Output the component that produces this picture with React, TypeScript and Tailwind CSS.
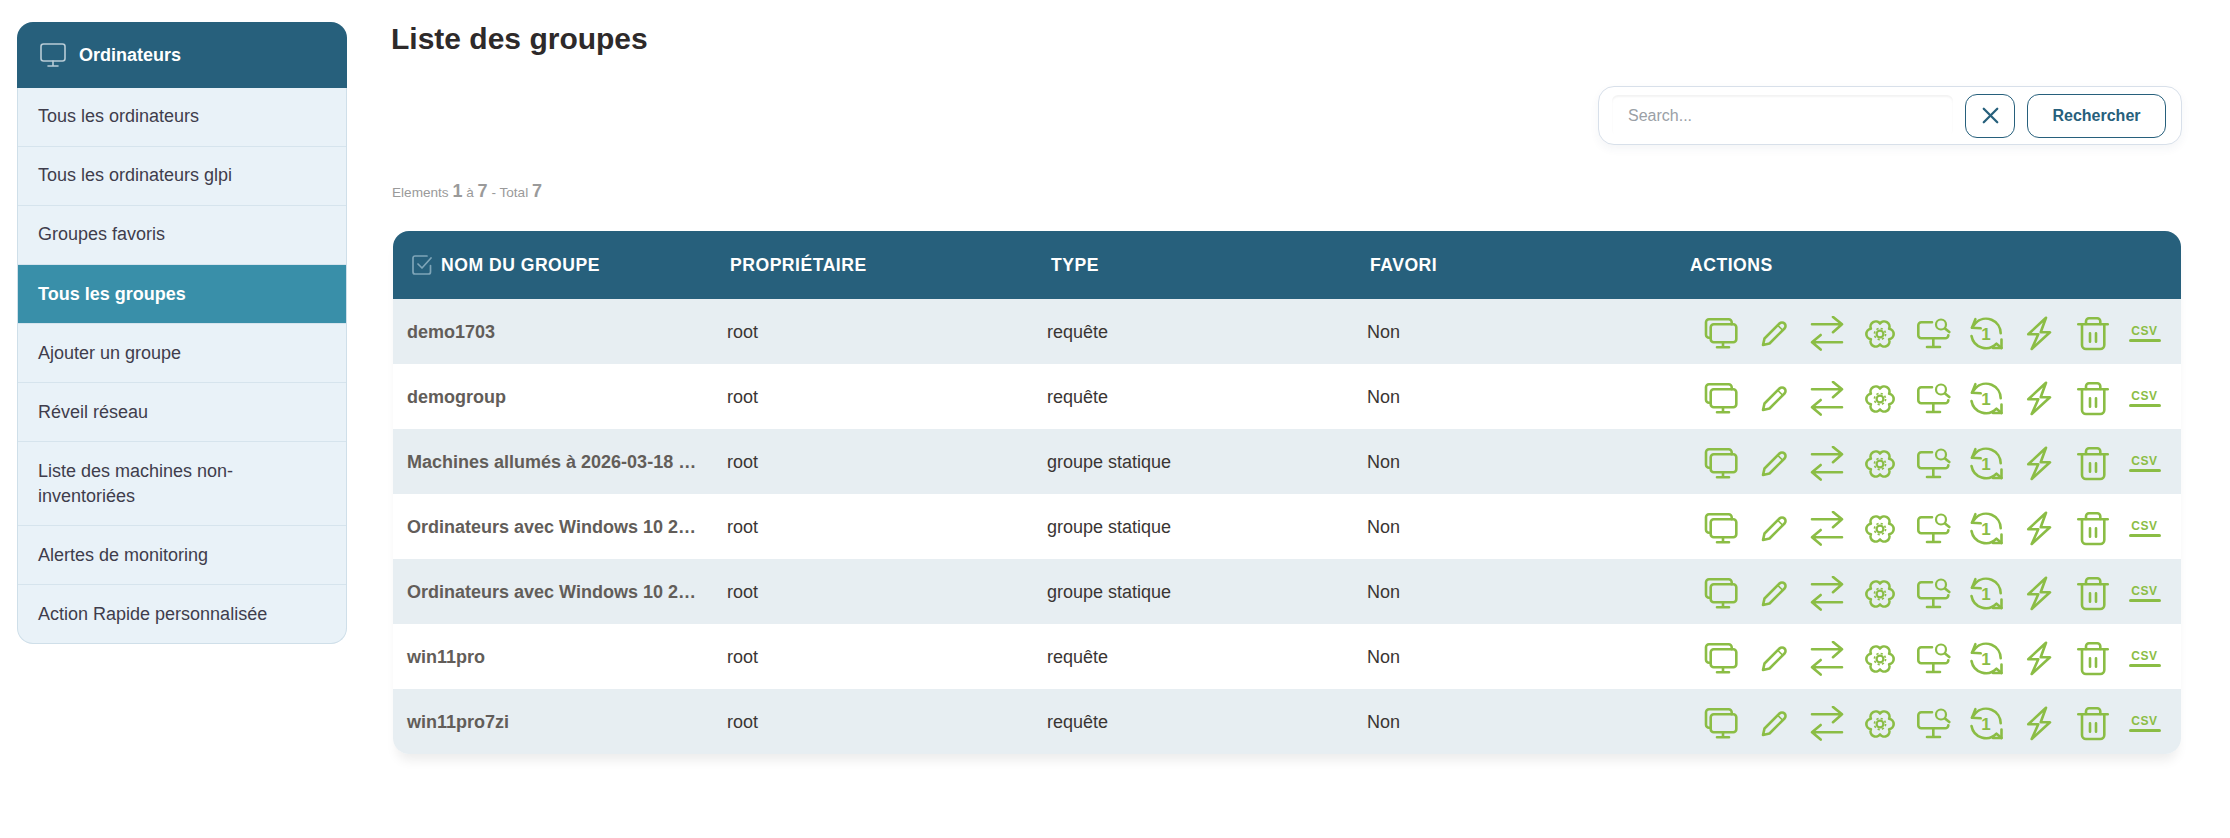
import { X } from 'lucide-react';
import type { ReactNode } from 'react';

const MENU = [
  'Tous les ordinateurs',
  'Tous les ordinateurs glpi',
  'Groupes favoris',
  'Tous les groupes',
  'Ajouter un groupe',
  'Réveil réseau',
  'Liste des machines non-inventoriées',
  'Alertes de monitoring',
  'Action Rapide personnalisée',
];

const GROUPS = [
  { name: 'demo1703', type: 'requête' },
  { name: 'demogroup', type: 'requête' },
  { name: 'Machines allumés à 2026-03-18 …', type: 'groupe statique' },
  { name: 'Ordinateurs avec Windows 10 2…', type: 'groupe statique' },
  { name: 'Ordinateurs avec Windows 10 2…', type: 'groupe statique' },
  { name: 'win11pro', type: 'requête' },
  { name: 'win11pro7zi', type: 'requête' },
];

const COLS = 'grid grid-cols-[320px_320px_320px_320px_1fr]';

const Icon = ({ children }: { children: ReactNode }) => (
  <svg
    viewBox="0 0 36 36"
    className="w-9 h-9 text-[#8bbd45]"
    fill="none"
    stroke="currentColor"
    strokeWidth="2.6"
    strokeLinecap="round"
    strokeLinejoin="round"
  >
    {children}
  </svg>
);

const RowActions = () => (
  <div className="flex items-center pl-[21px] pt-[3px]">
    <div className="w-[53px] flex justify-center">
      <Icon>
        <path d="M7.7 21.7H6a3 3 0 0 1-3-3V6.3a3 3 0 0 1 3-3h19.7a3 3 0 0 1 3 3v2" />
        <rect x="7.7" y="8.3" width="25.6" height="18" rx="3" />
        <path d="M20 26.3V31M14 31.2H26" />
      </Icon>
    </div>
    <div className="w-[53px] flex justify-center">
      <Icon>
        <path d="M7 29l1.5-6.5L23.5 7.5a3.2 3.2 0 0 1 5 5L13.5 27.5z" />
        <path d="M22 9.5l4.5 4.5" strokeWidth="1.6" />
      </Icon>
    </div>
    <div className="w-[53px] flex justify-center">
      <Icon>
        <path d="M3 8.3H33M24 .9L33 8.3L24 16.2" />
        <path d="M33 26.3H3M11.7 19L3 26.3L11.7 33.6" />
      </Icon>
    </div>
    <div className="w-[53px] flex justify-center">
      <Icon>
        <path d="M18 7.5A5.3 5.3 0 0 1 27.1 12.75A5.3 5.3 0 0 1 27.1 23.25A5.3 5.3 0 0 1 18 28.5A5.3 5.3 0 0 1 8.9 23.25A5.3 5.3 0 0 1 8.9 12.75A5.3 5.3 0 0 1 18 7.5Z" />
        <circle cx="18" cy="18" r="3.4" strokeWidth="2.2" />
        <circle cx="18" cy="18" r="5.6" strokeWidth="1.6" strokeDasharray="2.2 2.2" strokeLinecap="butt" />
      </Icon>
    </div>
    <div className="w-[53px] flex justify-center">
      <Icon>
        <path d="M17 6.3H6.3a3 3 0 0 0-3 3V19.3a3 3 0 0 0 3 3H30.3a3 3 0 0 0 3-3V19.5" />
        <path d="M18.3 22.3V30.5M12 31H25" />
        <circle cx="26" cy="8.5" r="5" strokeWidth="2.2" />
        <path d="M30 12.5L34.3 16" />
      </Icon>
    </div>
    <div className="w-[53px] flex justify-center">
      <Icon>
        <path d="M4 11.7L7.6 7A14.7 14.7 0 0 1 32.7 17.3" />
        <path d="M7.4 3.2L4 11.7L12.7 12.3" />
        <path d="M3.5 20A14.7 14.7 0 0 0 28.5 27.7L33.5 32" />
        <path d="M33.5 23.5V32H25" />
        <text x="18" y="24" textAnchor="middle" fontSize="17" fontWeight="700" fill="currentColor" stroke="none" fontFamily="'Liberation Sans', sans-serif">1</text>
      </Icon>
    </div>
    <div className="w-[53px] flex justify-center">
      <Icon>
        <path d="M25 1.7L7.3 18.3H17.3L10.7 33L29 16.3H19.7Z" />
      </Icon>
    </div>
    <div className="w-[53px] flex justify-center">
      <Icon>
        <path d="M4.3 8.3H33.7" />
        <path d="M12 8V5.3a3 3 0 0 1 3-3h8.3a3 3 0 0 1 3 3V8" />
        <path d="M8 8.3V29a4 4 0 0 0 4 4H26.3a4 4 0 0 0 4-4V8.3" />
        <path d="M16 17.3V25.7M22 17.3V25.7" />
      </Icon>
    </div>
    <div className="w-[53px] flex justify-center">
      <div className="flex flex-col items-center w-8">
        <span className="text-[12px] leading-[12px] font-bold tracking-[0.6px] text-[#8bbd45]">CSV</span>
        <div className="w-8 h-[3px] mt-[2px] rounded-full bg-[#8bbd45]" />
      </div>
    </div>
  </div>
);

export default function App() {
  return (
    <div className="min-h-[838px] bg-white flex items-start font-['Liberation_Sans',Arial,sans-serif]">
      {/* Sidebar */}
      <aside className="ml-[17px] mt-[22px] w-[330px] shrink-0">
        <div className="h-[66px] bg-[#27607c] rounded-t-[16px] flex items-center pl-[23px] gap-[13px]">
          <svg viewBox="0 0 26 24" className="w-[26px] h-6 text-[#b9ccd6]" fill="none" stroke="currentColor" strokeWidth="1.6" strokeLinecap="round" strokeLinejoin="round">
            <rect x="1" y="1" width="24" height="17" rx="2.5" />
            <path d="M13 18V23M8 23H18" />
          </svg>
          <span className="text-[18px] font-bold text-white">Ordinateurs</span>
        </div>
        <ul className="bg-[#e9f2f8] border border-t-0 border-[#cfdfe9] rounded-b-[16px] overflow-hidden">
          {MENU.map((item, i) => {
            const active = item === 'Tous les groupes';
            return (
              <li
                key={item}
                className={`pl-[20px] pr-[40px] text-[18px] leading-[25px] border-b last:border-b-0 border-[#d6e4ed] ${
                  i > 2 ? 'pt-[17px] pb-[16px]' : 'pt-[16px] pb-[17px]'
                } ${active ? 'bg-[#398fa9] text-white font-bold' : 'text-[#3f3d4c]'}`}
              >
                {item}
              </li>
            );
          })}
        </ul>
      </aside>

      {/* Main */}
      <main className="ml-[46px] w-[1788px] shrink-0">
        <h1 className="mt-[21px] -ml-[2px] text-[30px] leading-[36px] font-bold text-[#2e2a2a]">Liste des groupes</h1>

        <div className="mt-[29px] -mr-px flex justify-end">
          <div className="w-[584px] h-[59px] border border-[#d8e0ea] rounded-[16px] bg-white shadow-[0_4px_10px_rgba(30,60,90,0.05)] flex items-center pl-[13px] pr-[15px]">
            <input
              placeholder="Search..."
              className="w-[341px] h-[41px] px-4 text-[16px] bg-white outline-none placeholder:text-[#9aa0a6] rounded-[6px] shadow-[inset_0_2px_2px_rgba(0,0,0,0.05)]"
            />
            <button className="ml-3 w-[50px] h-[44px] rounded-[12px] border border-[#27607c] text-[#27607c] flex items-center justify-center">
              <X size={27} strokeWidth={2} />
            </button>
            <button className="ml-3 w-[139px] h-[44px] rounded-[12px] border border-[#27607c] text-[#27607c] text-[16px] font-bold">
              Rechercher
            </button>
          </div>
        </div>

        <p className="mt-[35px] -ml-px h-[22px] text-[13.6px] leading-[22px] text-[#9a9a9a]">
          Elements <b className="text-[18px]">1</b> à <b className="text-[18px]">7</b> - Total <b className="text-[18px]">7</b>
        </p>

        {/* Table */}
        <div className="mt-[29px] rounded-[16px] bg-white shadow-[0_10px_12px_-4px_rgba(0,0,0,0.08)]">
          <div className={`${COLS} h-[68px] items-center bg-[#27607c] rounded-t-[16px] text-[17.6px] font-bold tracking-[0.5px] text-white uppercase`}>
            <div className="flex items-center gap-[9px] pl-[19px]">
              <svg viewBox="0 0 20 20" className="w-5 h-5 text-[#7fa5b8]" fill="none" stroke="currentColor" strokeWidth="1.7" strokeLinecap="round" strokeLinejoin="round">
                <path d="M18.5 10.5V17a2 2 0 0 1-2 2H3a2 2 0 0 1-2-2V3a2 2 0 0 1 2-2h12" />
                <path d="M6 9l4 4 9-10" />
              </svg>
              <span>Nom du groupe</span>
            </div>
            <div className="pl-[17px]">Propriétaire</div>
            <div className="pl-[18px]">Type</div>
            <div className="pl-[17px]">Favori</div>
            <div className="pl-[17px]">Actions</div>
          </div>
          {GROUPS.map((g, i) => (
            <div
              key={i}
              className={`${COLS} h-[65px] pt-px items-center text-[18px] text-[#3a3533] ${
                i % 2 === 0 ? 'bg-[#e7eef2]' : 'bg-white'
              } ${i === GROUPS.length - 1 ? 'rounded-b-[16px]' : ''}`}
            >
              <div className="pl-[14px] whitespace-nowrap font-bold text-[#625d59]">{g.name}</div>
              <div className="pl-[14px]">root</div>
              <div className="pl-[14px]">{g.type}</div>
              <div className="pl-[14px]">Non</div>
              <RowActions />
            </div>
          ))}
        </div>
      </main>
    </div>
  );
}
